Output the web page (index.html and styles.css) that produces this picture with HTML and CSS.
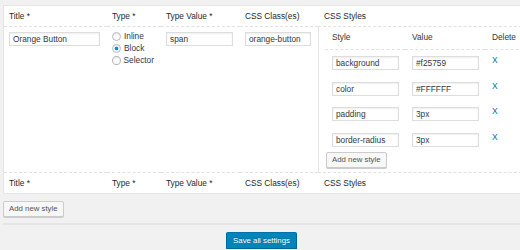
FILE: index.html
```html
<!DOCTYPE html>
<html lang="en">

<head>
    <meta charset="UTF-8">
    <meta name="viewport" content="width=device-width, initial-scale=1.0">
    <title>Custom Styles</title>

    <link rel="stylesheet" href="styles.css">
</head>

<body>
    <div class="wrap">
        <table class="styles-table">
            <colgroup>
                <col class="col-title">
                <col class="col-type">
                <col class="col-value">
                <col class="col-class">
                <col class="col-styles">
            </colgroup>
            <thead>
                <tr>
                    <th>Title *</th>
                    <th>Type *</th>
                    <th>Type Value *</th>
                    <th>CSS Class(es)</th>
                    <th class="th-styles">CSS Styles</th>
                </tr>
            </thead>
            <tbody>
                <tr>
                    <td><input class="field" type="text" value="Orange Button"></td>
                    <td class="type-cell">
                        <label class="radio-row"><input type="radio" name="type">Inline</label>
                        <label class="radio-row"><input type="radio" name="type" checked>Block</label>
                        <label class="radio-row"><input type="radio" name="type">Selector</label>
                    </td>
                    <td><input class="field" type="text" value="span"></td>
                    <td><input class="field" type="text" value="orange-button"></td>
                    <td class="styles-cell">
                        <table class="inner-table">
                            <thead>
                                <tr>
                                    <th>Style</th>
                                    <th>Value</th>
                                    <th>Delete</th>
                                </tr>
                            </thead>
                            <tbody>
                                <tr>
                                    <td><input class="field" type="text" value="background"></td>
                                    <td><input class="field" type="text" value="#f25759"></td>
                                    <td><a class="delete" href="#">X</a></td>
                                </tr>
                                <tr>
                                    <td><input class="field" type="text" value="color"></td>
                                    <td><input class="field" type="text" value="#FFFFFF"></td>
                                    <td><a class="delete" href="#">X</a></td>
                                </tr>
                                <tr>
                                    <td><input class="field" type="text" value="padding"></td>
                                    <td><input class="field" type="text" value="3px"></td>
                                    <td><a class="delete" href="#">X</a></td>
                                </tr>
                                <tr>
                                    <td><input class="field" type="text" value="border-radius"></td>
                                    <td><input class="field" type="text" value="3px"></td>
                                    <td><a class="delete" href="#">X</a></td>
                                </tr>
                            </tbody>
                        </table>
                        <button class="button">Add new style</button>
                    </td>
                </tr>
            </tbody>
            <tfoot>
                <tr>
                    <th>Title *</th>
                    <th>Type *</th>
                    <th>Type Value *</th>
                    <th>CSS Class(es)</th>
                    <th class="th-styles">CSS Styles</th>
                </tr>
            </tfoot>
        </table>

        <div class="actions">
            <button class="button">Add new style</button>
        </div>

        <div class="submit">
            <button class="button button-primary">Save all settings</button>
        </div>
    </div>
</body>

</html>
```

FILE: styles.css
```css
* {
    box-sizing: border-box;
}

body {
    margin: 0;
    background-color: #f1f1f1;
    color: #23282d;
    font-family: "Liberation Sans", Arial, sans-serif;
    font-size: 8.3px;
    overflow: hidden;
}

.wrap {
    padding-top: 5px;
    margin-left: 3px;
}

/* main table */
.styles-table {
    width: 560px;
    table-layout: fixed;
    border-collapse: separate;
    border-spacing: 0;
    background-color: #fff;
    border: 1px solid #e5e5e5;
}

.col-title {
    width: 103px;
}

.col-type {
    width: 54px;
}

.col-value {
    width: 79px;
}

.col-class {
    width: 78px;
}

.styles-table th {
    font-weight: normal;
    text-align: left;
    line-height: 11px;
    padding: 4.5px 5px;
}

.styles-table thead th {
    border-bottom: 1px dashed #e1e1e1;
}

.styles-table tfoot th {
    border-top: 1px dashed #e1e1e1;
}

.styles-table .th-styles {
    padding-left: 6px;
}

.styles-table td {
    vertical-align: top;
    padding: 5px 7px 5px 5px;
}

.styles-table td.type-cell {
    padding-top: 3px;
}

.styles-table td.styles-cell {
    padding: 0 0 3.75px 6px;
    border-left: 1px solid #e5e5e5;
}

.radio-row {
    display: flex;
    align-items: center;
    gap: 3px;
    height: 12px;
    color: #32373c;
}

.radio-row input {
    appearance: none;
    -webkit-appearance: none;
    margin: 0;
    width: 9px;
    height: 9px;
    border: 1px solid #b4b9be;
    border-radius: 50%;
    background-color: #fff;
    box-shadow: inset 0 1px 2px rgba(0, 0, 0, .1);
}

.radio-row input:checked {
    background: radial-gradient(circle, #1e8cbe 0, #1e8cbe 1.6px, #fff 2.2px);
}

.field {
    display: block;
    width: 100%;
    height: 14px;
    margin: 0;
    padding: 0 3px;
    border: 1px solid #ddd;
    background-color: #fff;
    box-shadow: inset 0 1px 2px rgba(0, 0, 0, .07);
    color: #32373c;
    font-family: inherit;
    font-size: 8.3px;
    outline: none;
}

/* styles list inside the last column */
.inner-table {
    width: 240px;
    table-layout: fixed;
    border-collapse: separate;
    border-spacing: 0;
}

.inner-table th {
    width: 80px;
    font-weight: normal;
    text-align: left;
    line-height: 11px;
    padding: 5px 6px 6.25px 7px;
    color: #32373c;
}

.styles-table .inner-table td {
    padding: 5.75px 6px 5.75px 7px;
}

.delete {
    display: block;
    line-height: 8px;
    color: #0073aa;
    text-decoration: none;
    font-size: 8.5px;
}

.button {
    display: inline-block;
    height: 16px;
    margin: 0;
    padding: 0 5px;
    line-height: 14px;
    font-family: inherit;
    font-size: 7.8px;
    color: #555;
    background-color: #f7f7f7;
    border: 1px solid #ccc;
    border-radius: 2px;
    box-shadow: 0 1px 0 #ccc;
    cursor: pointer;
}

.styles-cell .button {
    margin-left: 1px;
}

.actions {
    margin-top: 7px;
}

.submit {
    width: 517px;
    margin-top: 6px;
    padding-top: 7px;
    border-top: 2px solid #e5e5e5;
    text-align: center;
}

.button-primary {
    height: 17px;
    line-height: 15px;
    padding: 0 6px;
    color: #fff;
    background-color: #0085ba;
    border-color: #0073aa #006799 #006799;
    box-shadow: 0 1px 0 #006799;
    text-shadow: 0 -1px 1px #006799;
}
```
